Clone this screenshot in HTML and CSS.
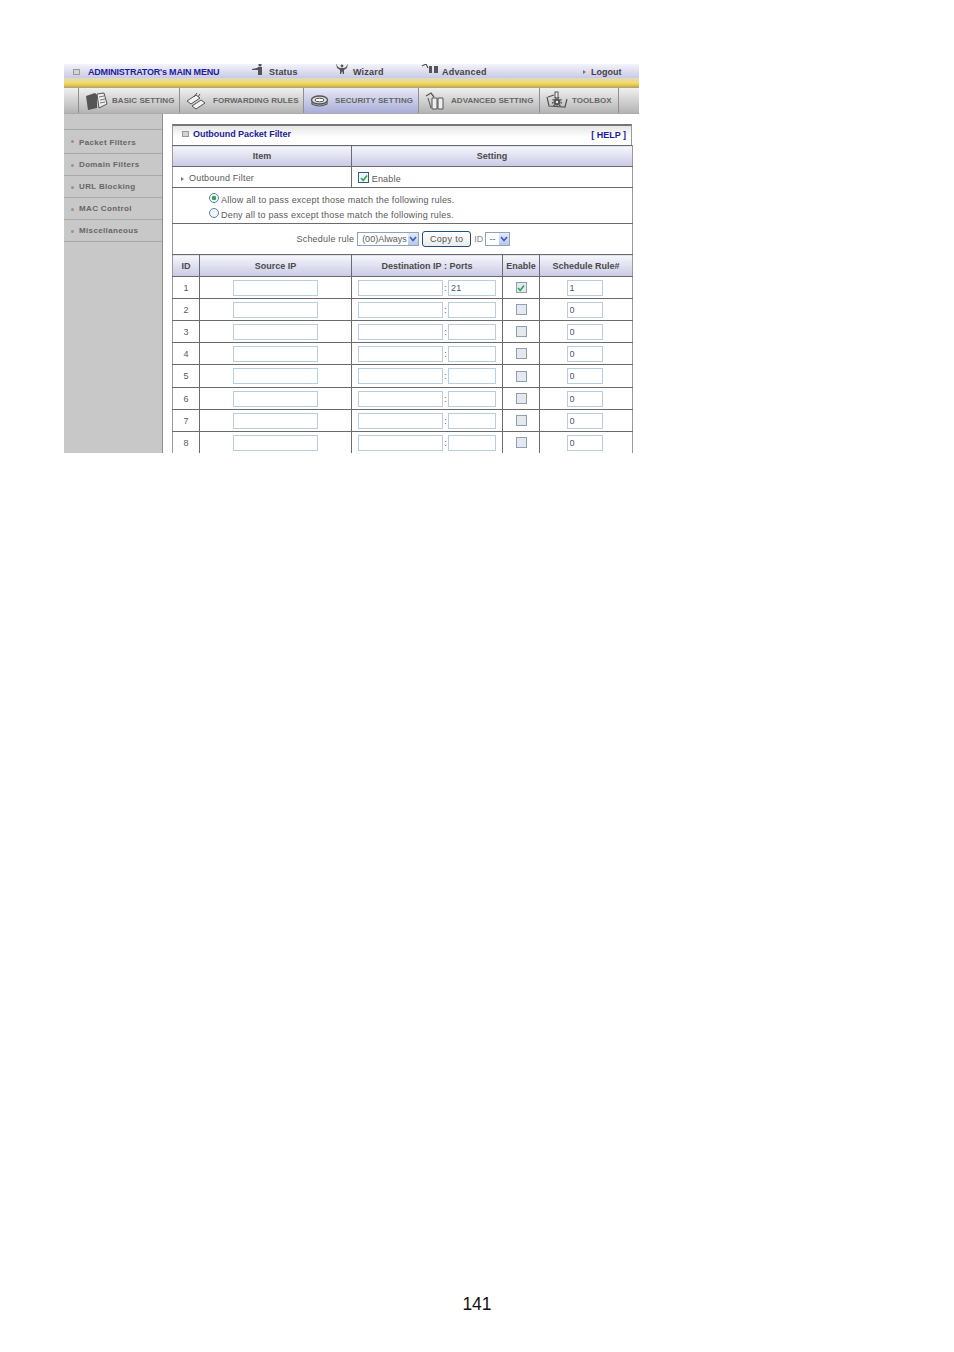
FILE: index.html
```html
<!DOCTYPE html>
<html lang="en">
    <head>
        <meta charset="UTF-8" />
        <meta name="viewport" content="width=device-width, initial-scale=1.0" />
        <title>Outbound Packet Filter</title>
        <link rel="stylesheet" href="styles.css">
    </head>
    <body>
        <div class="shot">
            <div class="top-menu">
                <span class="top-title"><span class="bullet"></span>ADMINISTRATOR's MAIN MENU</span>
                <span class="top-link link-status">
                    <svg width="14" height="12" viewBox="0 0 14 12"><circle cx="9" cy="2" r="1.6" fill="#555"/><path d="M1 6 L6 5 L7 4 H11 V12 H7 V7 L1 7Z" fill="#555"/></svg>
                    Status
                </span>
                <span class="top-link link-wizard">
                    <svg width="14" height="12" viewBox="0 0 14 12"><circle cx="7" cy="3" r="1.4" fill="#555"/><path d="M1 0 L3 4 L5 5 H9 L11 4 L13 0 L12 5 L9 7 V11 H8 L7 8 L6 11 H5 V7 L2 5Z" fill="#555"/></svg>
                    Wizard
                </span>
                <span class="top-link link-advanced">
                    <svg width="18" height="12" viewBox="0 0 18 12"><path d="M1 3 L5 1 L7 5" fill="none" stroke="#555" stroke-width="1.2"/><path d="M8 3 H11 V10 H8Z M13 3 H17 V10 H13Z" fill="#555"/></svg>
                    Advanced
                </span>
                <span class="top-link link-logout"><span class="arrow"></span>Logout</span>
            </div>
            <div class="gold-band"></div>
            <div class="tab-bar">
                <div class="tab tab-basic">
                    <svg width="24" height="20" viewBox="0 0 24 20"><path d="M1 5 L10 2 L12 4 V17 L3 19Z" fill="#555"/><path d="M12 3 L19 2 L22 13 L14 17Z" fill="#eee" stroke="#555"/><path d="M14 6 L19 5 M15 9 L20 8 M15 12 L20 11" stroke="#777"/></svg>
                    BASIC SETTING
                </div>
                <div class="tab tab-forward">
                    <svg width="20" height="18" viewBox="0 0 20 18"><path d="M1 9 L10 3 L14 6 L5 12Z M6 14 L15 8 L19 11 L10 17Z" fill="#f2f2f2" stroke="#555"/><path d="M11 1 L8 5 M14 2 L12 5" stroke="#555"/></svg>
                    FORWARDING RULES
                </div>
                <div class="tab tab-security tab-active">
                    <svg width="19" height="14" viewBox="0 0 19 14"><ellipse cx="9.5" cy="6" rx="8" ry="4" fill="#ddd" stroke="#555" stroke-width="1.4"/><ellipse cx="9.5" cy="6" rx="4.5" ry="1.8" fill="#fff" stroke="#555"/><path d="M2 8 V10 Q9 14 17 10 V8" fill="none" stroke="#555" stroke-width="1.2"/></svg>
                    SECURITY SETTING
                </div>
                <div class="tab tab-advanced">
                    <svg width="20" height="18" viewBox="0 0 20 18"><path d="M1 4 L6 1 L9 5" fill="none" stroke="#555" stroke-width="1.3"/><path d="M7 6 H12 V17 H7Z M13 6 H18 V17 H13Z" fill="#eee" stroke="#555"/><path d="M3 6 L6 16" stroke="#555"/></svg>
                    ADVANCED SETTING
                </div>
                <div class="tab tab-toolbox">
                    <svg width="22" height="20" viewBox="0 0 22 20"><path d="M2 6 L8 4 M1 6 L3 15 L19 16 L21 8" fill="none" stroke="#555" stroke-width="1.2"/><rect x="9" y="1" width="3" height="6" fill="#eee" stroke="#555"/><circle cx="11" cy="11" r="3.4" fill="#555"/><circle cx="11" cy="11" r="4.4" fill="none" stroke="#555" stroke-width="1.4" stroke-dasharray="1.5 1.5"/><circle cx="11" cy="11" r="1.2" fill="#eee"/></svg>
                    TOOLBOX
                </div>
            </div>
            <div class="main">
                <div class="side-menu">
                    <div class="side-item">Packet Filters</div>
                    <div class="side-item">Domain Filters</div>
                    <div class="side-item">URL Blocking</div>
                    <div class="side-item">MAC Control</div>
                    <div class="side-item">Miscellaneous</div>
                </div>
                <div class="content">
                    <div class="panel-title">
                        <span class="panel-name"><span class="bullet"></span>Outbound Packet Filter</span>
                        <span class="help">[ HELP ]</span>
                    </div>
                    <table class="filter-table">
                        <colgroup>
                            <col class="col-id">
                            <col class="col-source">
                            <col class="col-dest">
                            <col class="col-enable">
                            <col class="col-rule">
                        </colgroup>
                        <tr class="head-row row-item">
                            <th colspan="2">Item</th>
                            <th colspan="3">Setting</th>
                        </tr>
                        <tr class="row-outbound">
                            <td colspan="2" class="left"><span class="arrow"></span>Outbound Filter</td>
                            <td colspan="3" class="left enable-cell">
                                <span class="check on"><svg width="8" height="8" viewBox="0 0 8 8"><path d="M1 4 L3.2 6.4 L7 1.5" fill="none" stroke="#2fa84f" stroke-width="1.6"/></svg></span>
                                Enable
                            </td>
                        </tr>
                        <tr class="row-options">
                            <td colspan="5">
                                <div class="option"><span class="radio on"></span>Allow all to pass except those match the following rules.</div>
                                <div class="option"><span class="radio"></span>Deny all to pass except those match the following rules.</div>
                            </td>
                        </tr>
                        <tr class="row-schedule">
                            <td colspan="5">
                                <div class="schedule">
                                    Schedule rule
                                    <span class="select select-rule">(00)Always<span class="select-arrow"><svg width="8" height="6" viewBox="0 0 8 6"><path d="M1 1 L4 4.5 L7 1" fill="none" stroke="#3a5fb0" stroke-width="1.6"/></svg></span></span>
                                    <button class="copy-button">Copy to</button>
                                    <span class="id-label">ID</span>
                                    <span class="select select-id">--<span class="select-arrow"><svg width="8" height="6" viewBox="0 0 8 6"><path d="M1 1 L4 4.5 L7 1" fill="none" stroke="#3a5fb0" stroke-width="1.6"/></svg></span></span>
                                </div>
                            </td>
                        </tr>
                        <tr class="head-row row-columns">
                            <th>ID</th>
                            <th>Source IP</th>
                            <th>Destination IP : Ports</th>
                            <th>Enable</th>
                            <th>Schedule Rule#</th>
                        </tr>
                        <tr class="rule-row">
                            <td>1</td>
                            <td><input class="field field-ip" type="text"></td>
                            <td><div class="dest"><input class="field field-ip" type="text"><span class="colon">:</span><input class="field field-port" type="text" value="21"></div></td>
                            <td><span class="check small on"><svg width="8" height="8" viewBox="0 0 8 8"><path d="M1 4 L3.2 6.4 L7 1.5" fill="none" stroke="#2fa84f" stroke-width="1.6"/></svg></span></td>
                            <td><input class="field field-rule" type="text" value="1"></td>
                        </tr>
                        <tr class="rule-row">
                            <td>2</td>
                            <td><input class="field field-ip" type="text"></td>
                            <td><div class="dest"><input class="field field-ip" type="text"><span class="colon">:</span><input class="field field-port" type="text"></div></td>
                            <td><span class="check small"></span></td>
                            <td><input class="field field-rule" type="text" value="0"></td>
                        </tr>
                        <tr class="rule-row">
                            <td>3</td>
                            <td><input class="field field-ip" type="text"></td>
                            <td><div class="dest"><input class="field field-ip" type="text"><span class="colon">:</span><input class="field field-port" type="text"></div></td>
                            <td><span class="check small"></span></td>
                            <td><input class="field field-rule" type="text" value="0"></td>
                        </tr>
                        <tr class="rule-row">
                            <td>4</td>
                            <td><input class="field field-ip" type="text"></td>
                            <td><div class="dest"><input class="field field-ip" type="text"><span class="colon">:</span><input class="field field-port" type="text"></div></td>
                            <td><span class="check small"></span></td>
                            <td><input class="field field-rule" type="text" value="0"></td>
                        </tr>
                        <tr class="rule-row tall-row">
                            <td>5</td>
                            <td><input class="field field-ip" type="text"></td>
                            <td><div class="dest"><input class="field field-ip" type="text"><span class="colon">:</span><input class="field field-port" type="text"></div></td>
                            <td><span class="check small"></span></td>
                            <td><input class="field field-rule" type="text" value="0"></td>
                        </tr>
                        <tr class="rule-row">
                            <td>6</td>
                            <td><input class="field field-ip" type="text"></td>
                            <td><div class="dest"><input class="field field-ip" type="text"><span class="colon">:</span><input class="field field-port" type="text"></div></td>
                            <td><span class="check small"></span></td>
                            <td><input class="field field-rule" type="text" value="0"></td>
                        </tr>
                        <tr class="rule-row">
                            <td>7</td>
                            <td><input class="field field-ip" type="text"></td>
                            <td><div class="dest"><input class="field field-ip" type="text"><span class="colon">:</span><input class="field field-port" type="text"></div></td>
                            <td><span class="check small"></span></td>
                            <td><input class="field field-rule" type="text" value="0"></td>
                        </tr>
                        <tr class="rule-row">
                            <td>8</td>
                            <td><input class="field field-ip" type="text"></td>
                            <td><div class="dest"><input class="field field-ip" type="text"><span class="colon">:</span><input class="field field-port" type="text"></div></td>
                            <td><span class="check small"></span></td>
                            <td><input class="field field-rule" type="text" value="0"></td>
                        </tr>
                    </table>
                </div>
            </div>
        </div>
        <div class="page-number">141</div>
    </body>
</html>
```

FILE: styles.css
```css
body {
    margin: 0;
    height: 1352px;
    overflow: hidden;
    background-color: #ffffff;
    font-family: "Liberation Sans", Arial, sans-serif;
    position: relative;
}
.shot {
    width: 575px;
    height: 389px;
    margin: 64px 0 0 64px;
    overflow: hidden;
    font-size: 9px;
    letter-spacing: 0.2px;
    color: #5a5a5a;
}
.top-menu {
    height: 14px;
    box-sizing: border-box;
    padding-top: 1px;
    display: flex;
    align-items: center;
    font-weight: bold;
    background: linear-gradient(#f4f4fb, #c9c9e6);
}
.top-title {
    width: 187px;
    padding-left: 9px;
    box-sizing: border-box;
    color: #1c1c9c;
    letter-spacing: -0.2px;
    display: flex;
    align-items: center;
}
.bullet {
    display: inline-block;
    width: 5px;
    height: 4px;
    margin-right: 8px;
    background-color: #d4d4d4;
    border: 1px solid #999;
}
.top-link {
    display: flex;
    align-items: center;
    gap: 4px;
    color: #444;
}
.top-link svg {
    margin-top: -5px;
}
.link-status {
    width: 84px;
}
.link-wizard {
    width: 86px;
}
.link-advanced {
    width: 162px;
    gap: 3px;
}
.link-logout {
    gap: 0;
    letter-spacing: 0;
}
.arrow {
    display: inline-block;
    width: 0;
    height: 0;
    margin-right: 5px;
    border-left: 3px solid #777;
    border-top: 2.5px solid transparent;
    border-bottom: 2.5px solid transparent;
}
.gold-band {
    height: 10px;
    background: linear-gradient(#ded9c0, #efdc78 45%, #eccb3c 70%, #a89f7c);
}
.tab-bar {
    height: 26px;
    box-sizing: border-box;
    padding-left: 14px;
    display: flex;
    background: linear-gradient(#f0f0f0, #b4b4b4);
    border-bottom: 1px solid #aaa;
}
.tab {
    display: flex;
    align-items: center;
    box-sizing: border-box;
    padding-left: 6px;
    border-left: 1px solid #8f8f8f;
    color: #666;
    font-size: 8px;
    font-weight: bold;
    letter-spacing: 0.05px;
    white-space: nowrap;
}
.tab-basic {
    width: 101px;
    gap: 3px;
}
.tab-forward {
    width: 124px;
    gap: 7px;
}
.tab-security {
    width: 115px;
    gap: 6px;
}
.tab-advanced {
    width: 121px;
    gap: 6px;
}
.tab-toolbox {
    width: 80px;
    gap: 4px;
    border-right: 1px solid #8f8f8f;
}
.tab-active {
    background: linear-gradient(#e9e9f6, #a9aed8);
}
.main {
    display: flex;
    height: 339px;
}
.side-menu {
    width: 99px;
    box-sizing: border-box;
    padding-top: 15px;
    background-color: #c8c8c8;
    border-right: 1px solid #8e8e8e;
}
.side-item {
    height: 22px;
    box-sizing: border-box;
    padding-left: 15px;
    display: flex;
    align-items: center;
    position: relative;
    border-top: 1px solid #a8a8a8;
    font-size: 8px;
    font-weight: bold;
    letter-spacing: 0.35px;
    color: #666;
}
.side-item:first-child {
    height: 24px;
    padding-top: 1px;
}
.side-item:last-child {
    border-bottom: 1px solid #a8a8a8;
    height: 23px;
}
.side-item::before {
    content: "";
    position: absolute;
    left: 7px;
    top: 10px;
    width: 3px;
    height: 3px;
    border-radius: 50%;
    background-color: #949494;
}
.content {
    padding: 10px 0 0 9px;
    width: 460px;
}
.panel-title {
    height: 21px;
    box-sizing: border-box;
    padding: 0 5px 4px 9px;
    display: flex;
    align-items: center;
    justify-content: space-between;
    border-top: 2px solid #777;
    border-left: 1px solid #999;
    border-right: 1px solid #999;
    background: linear-gradient(#e6e6e6, #ffffff 60%);
    font-weight: bold;
    color: #1c1c9c;
}
.panel-name {
    display: flex;
    align-items: center;
    letter-spacing: -0.05px;
}
.panel-name .bullet {
    margin-right: 4px;
}
.help {
    padding-top: 2px;
    letter-spacing: 0;
}
.filter-table {
    width: 460px;
    table-layout: fixed;
    border-collapse: collapse;
    font-size: 9px;
}
.col-id {
    width: 27px;
}
.col-source {
    width: 152px;
}
.col-dest {
    width: 151px;
}
.col-enable {
    width: 37px;
}
.col-rule {
    width: 93px;
}
.filter-table th,
.filter-table td {
    padding: 0;
    text-align: center;
    border: 1px solid #6b6b6b;
}
.filter-table tr > :first-child {
    border-left-color: #999;
}
.filter-table tr > :last-child {
    border-right-color: #999;
}
.filter-table th {
    color: #4a4a4a;
    letter-spacing: 0;
    background: linear-gradient(#f6f6fc, #c9c9e6);
}
.filter-table .left {
    text-align: left;
    padding: 2px 0 0 8px;
}
.filter-table .enable-cell {
    padding-left: 6px;
}
.row-item {
    height: 21px;
}
.row-outbound {
    height: 21px;
}
.row-options {
    height: 36px;
}
.row-options td {
    padding-top: 3px;
}
.row-schedule {
    height: 31px;
}
.row-columns {
    height: 22px;
}
.rule-row {
    height: 22px;
}
.tall-row {
    height: 23px;
}
.option {
    display: flex;
    align-items: center;
    height: 15px;
    padding-left: 36px;
    text-align: left;
}
.radio {
    width: 8px;
    height: 8px;
    margin-right: 2px;
    margin-top: -3px;
    border: 1px solid #5d7ea8;
    border-radius: 50%;
    background-color: #f2f5fa;
}
.radio.on {
    background: radial-gradient(circle, #2fa84f 0, #2fa84f 35%, #f2f5fa 45%);
}
.check {
    display: inline-flex;
    align-items: center;
    justify-content: center;
    width: 9px;
    height: 9px;
    vertical-align: 0;
    border: 1px solid #2c5f8a;
    background-color: #f2f5fa;
}
.check.small {
    vertical-align: middle;
    border-color: #8aa0b4;
    background-color: #e6e8ee;
}
.schedule {
    display: flex;
    align-items: center;
    justify-content: center;
    padding-left: 1px;
    gap: 3px;
}
.select {
    display: flex;
    align-items: center;
    justify-content: space-between;
    box-sizing: border-box;
    height: 14px;
    padding-left: 4px;
    border: 1px solid #8fa4b8;
    background-color: #ffffff;
    letter-spacing: 0;
}
.select-rule {
    width: 62px;
}
.select-id {
    width: 25px;
    margin-left: -2px;
}
.select-arrow {
    display: flex;
    align-items: center;
    justify-content: center;
    width: 10px;
    height: 12px;
    background: linear-gradient(#e4eaf8, #b8c6ea);
}
.copy-button {
    width: 49px;
    height: 16px;
    padding: 0;
    border: 1px solid #1f4f7a;
    border-radius: 3px;
    background: linear-gradient(#ffffff, #ececec);
    color: #555;
    font-family: inherit;
    font-size: 9px;
    letter-spacing: 0.35px;
}
.id-label {
    color: #888;
}
.field {
    display: inline-block;
    box-sizing: border-box;
    height: 16px;
    padding: 0 2px;
    border: 1px solid #b7cde0;
    background-color: #ffffff;
    font-family: inherit;
    font-size: 9px;
    letter-spacing: 0.2px;
    color: #555;
    vertical-align: middle;
}
.field-ip {
    width: 85px;
}
.field-port {
    width: 48px;
}
.field-rule {
    width: 36px;
    margin-right: 3px;
}
.dest {
    display: flex;
    align-items: center;
    padding-left: 6px;
}
.colon {
    width: 5px;
    text-align: center;
}
.page-number {
    position: absolute;
    left: 0;
    right: 0;
    top: 1294px;
    text-align: center;
    font-size: 17.5px;
    color: #111;
}
```
